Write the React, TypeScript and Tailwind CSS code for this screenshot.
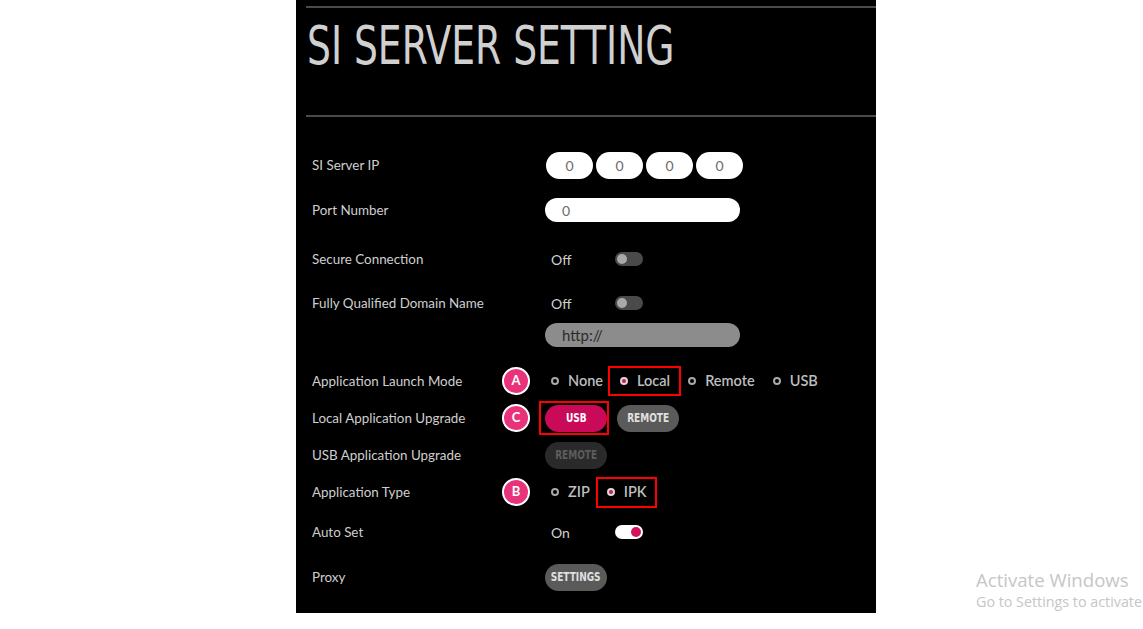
import React from 'react';

const label = 'w-[233px] shrink-0 text-[13.4px] text-[#cfcfcf]';

function Badge({ letter }: { letter: string }) {
  return (
    <div className="absolute left-[-43px] top-1/2 -translate-y-1/2 w-[28px] h-[28px] rounded-full bg-[#e8337b] border-2 border-white flex items-center justify-center text-white text-[13px] font-bold">
      {letter}
    </div>
  );
}

function Radio({ text, on = false }: { text: string; on?: boolean }) {
  return (
    <div className="flex items-center gap-[9px]">
      <span
        className={`w-[8px] h-[8px] rounded-full border-2 ${on ? 'border-[#d9d9d9] bg-[#d6145a]' : 'border-[#a8a8a8] bg-black'}`}
      />
      <span className="text-[14.5px] font-semibold text-[#bdbdbd]">{text}</span>
    </div>
  );
}

function Toggle({ on = false }: { on?: boolean }) {
  return (
    <div
      className={`w-[28px] h-[14px] rounded-full flex items-center px-[2px] ${on ? 'bg-white justify-end' : 'bg-[#4a4a4a] justify-start'}`}
    >
      <span className={`w-[10px] h-[10px] rounded-full ${on ? 'bg-[#d6105a]' : 'bg-[#a9a9a9]'}`} />
    </div>
  );
}

function Pill({ text, tone }: { text: string; tone: 'pink' | 'gray' | 'dim' }) {
  const tones = {
    pink: 'bg-[#c90a58] text-white',
    gray: 'bg-[#5a5a5a] text-[#e0e0e0]',
    dim: 'bg-[#2a2a2a] text-[#5c5c5c]',
  };
  return (
    <div className={`h-[27px] w-[62px] rounded-full flex items-center justify-center ${tones[tone]}`}>
      <span className="inline-block text-[12.5px] font-semibold scale-x-[0.72] font-['DejaVu_Sans','Liberation_Sans',sans-serif]">
        {text}
      </span>
    </div>
  );
}

export default function App() {
  return (
    <div className="relative w-[1143px] h-[629px] bg-white overflow-hidden font-['Lato','Noto_Sans',sans-serif]">
      <div className="ml-[296px] w-[580px] h-[613px] bg-black pl-[10px]">
        <div className="pt-[6px]">
          <div className="h-[2px] bg-[#4a4a4a]" />
        </div>
        <div className="h-[107px] pl-[1px] pt-[8px]">
          <h1 className="text-[54px] leading-[60px] font-normal text-[#d0d0d0] [font-family:'DejaVu_Sans_Condensed','DejaVu_Sans',sans-serif] origin-left scale-x-[0.775]">
            SI SERVER SETTING
          </h1>
        </div>
        <div className="h-[2px] bg-[#4a4a4a]" />

        <div className="pl-[6px]">
          {/* SI Server IP */}
          <div className="mt-[34px] h-[28px] flex items-center">
            <div className={label}>SI Server IP</div>
            <div className="flex gap-[3px] pl-[1px]">
              {[0, 1, 2, 3].map((i) => (
                <div
                  key={i}
                  className="w-[47px] h-[27px] rounded-full bg-white flex items-center justify-center text-[14px] text-[#6b6b6b]"
                >
                  0
                </div>
              ))}
            </div>
          </div>

          {/* Port */}
          <div className="mt-[19px] h-[24px] flex items-center">
            <div className={label}>Port Number</div>
            <div className="w-[195px] h-[24px] rounded-full bg-white flex items-center pl-[17px] text-[14px] text-[#6b6b6b]">
              0
            </div>
          </div>

          {/* Secure */}
          <div className="mt-[27px] h-[20px] flex items-center">
            <div className={label}>Secure Connection</div>
            <div className="w-[70px] pl-[6px] text-[14px] text-[#cfcfcf]">Off</div>
            <Toggle />
          </div>

          {/* FQDN */}
          <div className="mt-[24px] h-[20px] flex items-center">
            <div className={label}>Fully Qualified Domain Name</div>
            <div className="w-[70px] pl-[6px] text-[14px] text-[#cfcfcf]">Off</div>
            <Toggle />
          </div>

          <div className="mt-[10px] h-[24px] flex items-center">
            <div className={label} />
            <div className="w-[195px] h-[24px] rounded-full bg-[#8c8c8c] flex items-center pl-[17px] text-[15px] text-[#2b2b2b]">
              http://
            </div>
          </div>

          {/* Launch mode */}
          <div className="mt-[20px] h-[28px] flex items-center">
            <div className={label}>Application Launch Mode</div>
            <div className="relative flex items-center h-[28px] pl-[6px]">
              <Badge letter="A" />
              <Radio text="None" />
              <div className="ml-[5px] flex items-center h-[30px] pl-[10px] pr-[9px] border-2 border-[#ff0000]">
                <Radio text="Local" on />
              </div>
              <div className="ml-[7px]">
                <Radio text="Remote" />
              </div>
              <div className="ml-[18px]">
                <Radio text="USB" />
              </div>
            </div>
          </div>

          {/* Local upgrade */}
          <div className="mt-[9px] h-[28px] flex items-center">
            <div className={label}>Local Application Upgrade</div>
            <div className="relative flex items-center gap-[8px]">
              <Badge letter="C" />
              <div className="-ml-[6px] pt-[2px] pb-[1px] pl-[4px] border-2 border-[#ff0000]">
                <Pill text="USB" tone="pink" />
              </div>
              <Pill text="REMOTE" tone="gray" />
            </div>
          </div>

          {/* USB upgrade */}
          <div className="mt-[9px] h-[28px] flex items-center">
            <div className={label}>USB Application Upgrade</div>
            <Pill text="REMOTE" tone="dim" />
          </div>

          {/* App type */}
          <div className="mt-[9px] h-[28px] flex items-center">
            <div className={label}>Application Type</div>
            <div className="relative flex items-center h-[28px] pl-[6px]">
              <Badge letter="B" />
              <Radio text="ZIP" />
              <div className="ml-[6px] flex items-center h-[31px] pl-[9px] pr-[8px] border-2 border-[#ff0000]">
                <Radio text="IPK" on />
              </div>
            </div>
          </div>

          {/* Auto set */}
          <div className="mt-[16px] h-[20px] flex items-center">
            <div className={label}>Auto Set</div>
            <div className="w-[70px] pl-[6px] text-[14px] text-[#cfcfcf]">On</div>
            <Toggle on />
          </div>

          {/* Proxy */}
          <div className="mt-[21px] h-[28px] flex items-center">
            <div className={label}>Proxy</div>
            <div className="w-[64px]">
              <Pill text="SETTINGS" tone="gray" />
            </div>
          </div>
        </div>
      </div>

      <div className="absolute left-[976px] top-[567px] whitespace-nowrap font-['Open_Sans','Noto_Sans',sans-serif] text-[#c6c6c6]">
        <div className="text-[18.6px] leading-[25px]">Activate Windows</div>
        <div className="text-[14.3px] leading-[20px]">Go to Settings to activate</div>
      </div>
    </div>
  );
}
